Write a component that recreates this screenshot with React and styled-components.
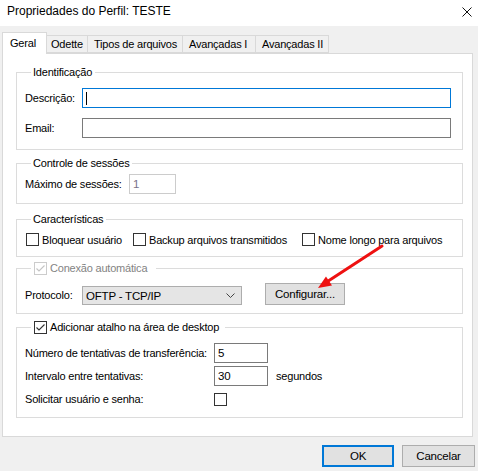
import React from "react";
import styled, { createGlobalStyle } from "styled-components";

const GlobalStyle = createGlobalStyle`
  html, body { margin: 0; padding: 0; }
  body {
    background: #f0f0f0;
    font-family: "Liberation Sans", Arial, sans-serif;
    font-size: 11px;
    letter-spacing: -0.2px;
    color: #000;
  }
`;

const Window = styled.div`
  position: relative;
  width: 478px;
  height: 471px;
  display: flex;
  flex-direction: column;
  background: #f0f0f0;
  overflow: hidden;
`;

const TitleBar = styled.div`
  height: 26px;
  flex: none;
  background: #fff;
  display: flex;
  align-items: flex-start;
  justify-content: space-between;
  padding: 4px 6px 0 7px;
  box-sizing: border-box;
`;

const Title = styled.span`
  font-size: 12px;
  line-height: 14px;
  letter-spacing: 0;
`;

const CloseIcon = styled.svg`
  margin-top: 3px;
`;

const TabStrip = styled.div`
  display: flex;
  align-items: flex-end;
  height: 21px;
  margin: 7px 0 -1px 2px;
  position: relative;
  z-index: 1;
`;

const Tab = styled.div`
  box-sizing: border-box;
  width: ${(p) => p.$w}px;
  height: ${(p) => (p.$active ? 22 : 18)}px;
  margin-left: ${(p) => (p.$first ? 0 : -1)}px;
  margin-bottom: ${(p) => (p.$active ? 0 : 1)}px;
  border: 1px solid #d9d9d9;
  border-bottom: ${(p) => (p.$active ? "none" : "1px solid #d9d9d9")};
  background: ${(p) => (p.$active ? "#fff" : "#f0f0f0")};
  display: flex;
  align-items: center;
  padding-left: ${(p) => p.$pad}px;
  padding-bottom: ${(p) => (p.$active ? 2 : 0)}px;
  white-space: nowrap;
`;

const Panel = styled.div`
  box-sizing: border-box;
  height: 384px;
  margin: 0 5px 0 2px;
  border: 1px solid #d9d9d9;
  background: #fff;
  padding: 11px 9px 0 13px;
  display: flex;
  flex-direction: column;
`;

const Group = styled.fieldset`
  margin: ${(p) => p.$mt || 0}px 0 0 0;
  padding: ${(p) => p.$pt}px 11px ${(p) => p.$pb}px 8px;
  border: 1px solid #dcdcdc;
  min-width: 0;
`;

const Legend = styled.legend`
  height: 14px;
  line-height: 14px;
  margin-left: 6px;
  padding: 0 ${(p) => p.$pr || 3}px 0 ${(p) => p.$pl || 2}px;
  display: flex;
  align-items: center;
  gap: 3px;
  color: ${(p) => (p.$disabled ? "#838383" : "#000")};
  white-space: nowrap;
`;

const FieldGrid = styled.div`
  display: grid;
  grid-template-columns: ${(p) => p.$cols};
  grid-auto-rows: ${(p) => p.$row || 20}px;
  row-gap: ${(p) => p.$gap || 0}px;
  align-items: center;
`;

const Label = styled.span`
  white-space: nowrap;
  line-height: 14px;
`;

const TextBox = styled.div`
  box-sizing: border-box;
  height: 20px;
  width: ${(p) => (p.$w ? `${p.$w}px` : "auto")};
  border: 1px solid ${(p) => (p.$focus ? "#0078d7" : p.$disabled ? "#cccccc" : "#7a7a7a")};
  background: #fff;
  color: ${(p) => (p.$disabled ? "#7a7288" : "#000")};
  display: flex;
  align-items: center;
  padding-left: 3px;
  font-size: 11.5px;
`;

const Caret = styled.span`
  width: 1px;
  height: 13px;
  background: #000;
`;

const CheckRow = styled.div`
  display: grid;
  grid-template-columns: 107px 169px auto;
  padding-left: 1px;
  align-items: center;
`;

const CheckItem = styled.label`
  display: flex;
  align-items: center;
  gap: 3px;
  white-space: nowrap;
`;

const Box = styled.span`
  box-sizing: border-box;
  width: 13px;
  height: 13px;
  flex: none;
  border: 1px solid ${(p) => (p.$disabled ? "#cccccc" : "#333")};
  background: #fff;
  display: flex;
  align-items: center;
  justify-content: center;
`;

const Row = styled.div`
  display: flex;
  align-items: flex-end;
  height: 22px;
`;

const RowLabel = styled.span`
  width: 57px;
  line-height: 19px;
  height: 19px;
`;

const Select = styled.div`
  box-sizing: border-box;
  width: 160px;
  height: 19px;
  border: 1px solid #adadad;
  background: #e5e5e5;
  display: flex;
  align-items: center;
  justify-content: space-between;
  padding: 0 6px 0 3px;
  font-size: 11.5px;
`;

const Button = styled.div`
  box-sizing: border-box;
  width: ${(p) => p.$w}px;
  height: 22px;
  border: ${(p) => (p.$default ? "2px solid #0078d7" : "1px solid #adadad")};
  background: #e1e1e1;
  display: flex;
  align-items: center;
  justify-content: center;
  font-size: 11.5px;
`;

const ConfigButton = styled(Button)`
  margin-left: 23px;
`;

const Suffix = styled.span`
  padding-left: 8px;
`;

const Footer = styled.div`
  display: flex;
  justify-content: flex-end;
  gap: 8px;
  padding: 8px 3px 0 0;
`;

const Arrow = styled.svg`
  position: absolute;
  left: 315px;
  top: 243px;
  pointer-events: none;
`;

function CheckBox({ checked, disabled }) {
  const stroke = disabled ? "#c4c4c4" : "#333";
  return (
    <Box $disabled={disabled}>
      {checked && (
        <svg width="11" height="11" viewBox="0 0 11 11">
          <path d="M1.5 5.5 L4 8 L9.5 2.5" fill="none" stroke={stroke} strokeWidth="1.1" />
        </svg>
      )}
    </Box>
  );
}

const tabs = [
  { name: "Geral", w: 45, pad: 7, active: true },
  { name: "Odette", w: 42, pad: 4 },
  { name: "Tipos de arquivos", w: 96, pad: 6 },
  { name: "Avançadas I", w: 74, pad: 6 },
  { name: "Avançadas II", w: 74, pad: 6 },
];

export default function App() {
  return (
    <>
      <GlobalStyle />
      <Window>
        <TitleBar>
          <Title>Propriedades do Perfil: TESTE</Title>
          <CloseIcon width="10" height="10" viewBox="0 0 10 10">
            <path d="M0.5 0.5 L9.5 9.5 M9.5 0.5 L0.5 9.5" stroke="#111" strokeWidth="1" fill="none" />
          </CloseIcon>
        </TitleBar>

        <TabStrip>
          {tabs.map((t, i) => (
            <Tab key={t.name} $w={t.w} $pad={t.pad} $active={t.active} $first={i === 0}>
              {t.name}
            </Tab>
          ))}
        </TabStrip>

        <Panel>
          <Group $pt={9} $pb={11}>
            <Legend>Identificação</Legend>
            <FieldGrid $cols="57px 1fr" $gap={10}>
              <Label>Descrição:</Label>
              <TextBox $focus>
                <Caret />
              </TextBox>
              <Label>Email:</Label>
              <TextBox />
            </FieldGrid>
          </Group>

          <Group $mt={6} $pt={4} $pb={9}>
            <Legend>Controle de sessões</Legend>
            <FieldGrid $cols="104px 47px">
              <Label>Máximo de sessões:</Label>
              <TextBox $w={47} $disabled>1</TextBox>
            </FieldGrid>
          </Group>

          <Group $mt={8} $pt={7} $pb={10}>
            <Legend>Características</Legend>
            <CheckRow>
              <CheckItem>
                <CheckBox />
                Bloquear usuário
              </CheckItem>
              <CheckItem>
                <CheckBox />
                Backup arquivos transmitidos
              </CheckItem>
              <CheckItem>
                <CheckBox />
                Nome longo para arquivos
              </CheckItem>
            </CheckRow>
          </Group>

          <Group $mt={4} $pt={8} $pb={8}>
            <Legend $disabled $pl={3} $pr={9}>
              <CheckBox checked disabled />
              Conexão automática
            </Legend>
            <Row>
              <RowLabel>Protocolo:</RowLabel>
              <Select>
                OFTP - TCP/IP
                <svg width="9" height="5" viewBox="0 0 9 5">
                  <path d="M0.5 0.5 L4.5 4.5 L8.5 0.5" fill="none" stroke="#444" strokeWidth="1" />
                </svg>
              </Select>
              <ConfigButton $w={80}>Configurar...</ConfigButton>
            </Row>
          </Group>

          <Group $mt={6} $pt={9} $pb={8}>
            <Legend $pl={3} $pr={6}>
              <CheckBox checked />
              Adicionar atalho na área de desktop
            </Legend>
            <FieldGrid $cols="189px 54px auto" $gap={3}>
              <Label>Número de tentativas de transferência:</Label>
              <TextBox $w={54}>5</TextBox>
              <span />
              <Label>Intervalo entre tentativas:</Label>
              <TextBox $w={54}>30</TextBox>
              <Suffix>segundos</Suffix>
              <Label>Solicitar usuário e senha:</Label>
              <CheckBox />
              <span />
            </FieldGrid>
          </Group>
        </Panel>

        <Footer>
          <Button $w={72} $default>OK</Button>
          <Button $w={73}>Cancelar</Button>
        </Footer>

        <Arrow width="70" height="50" viewBox="0 0 70 50">
          <line x1="67" y1="3" x2="14" y2="37.5" stroke="#ee1111" strokeWidth="3" strokeLinecap="round" />
          <polygon points="3,45 17,42.5 11,33.5" fill="#ee1111" />
        </Arrow>
      </Window>
    </>
  );
}
